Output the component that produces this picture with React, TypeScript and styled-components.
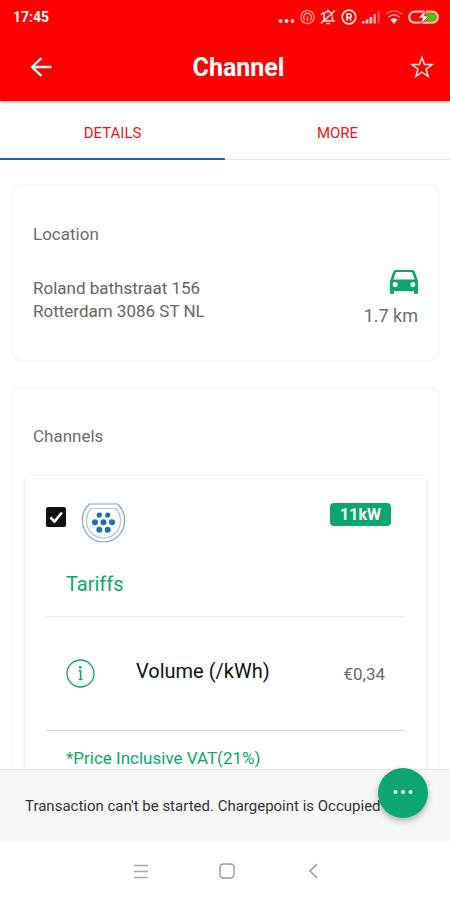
import React from "react";
import styled, { createGlobalStyle } from "styled-components";

const GREEN = "#0ba66e";
const RED = "#ff0000";
const GREY = "#6c6c6c";

const GlobalStyle = createGlobalStyle`
  *, *::before, *::after { box-sizing: border-box; }
  body { margin: 0; background: #fff; font-family: Roboto, sans-serif; }
  button { font: inherit; color: inherit; border: 0; padding: 0; background: none; cursor: pointer; }
  h1, h2, h3, p { margin: 0; font-weight: 400; }
  svg { display: block; }
`;

const Screen = styled.div`
  display: flex;
  flex-direction: column;
  height: 100vh;
  overflow: hidden;
`;

const Header = styled.header`
  flex: none;
  background: ${RED};
  color: #fff;
  box-shadow: 0 1px 4px rgba(0, 0, 0, 0.35);
  z-index: 1;
`;

const StatusBar = styled.div`
  display: flex;
  justify-content: space-between;
  align-items: center;
  height: 33px;
  padding: 0 11px 0 13px;
  font-size: 14px;
  font-weight: 700;
`;

const StatusIcons = styled.div`
  display: flex;
  align-items: center;
  gap: 5px;
`;

const AppBar = styled.div`
  display: grid;
  grid-template-columns: 48px 1fr 48px;
  align-items: center;
  height: 68px;
  padding: 0 4px 0 17px;
`;

const Title = styled.h1`
  padding: 2px 0 0 14px;
  font-size: 25px;
  font-weight: 700;
  line-height: 32px;
  text-align: center;
`;

const IconButton = styled.button`
  display: flex;
  align-items: center;
  justify-content: center;
  height: 48px;
`;

const Tabs = styled.div`
  flex: none;
  display: flex;
  border-bottom: 1px solid #e6e6e6;
`;

const Tab = styled.button<{ $active?: boolean }>`
  flex: 1;
  height: 59px;
  margin-bottom: -1px;
  padding-top: 6px;
  border-bottom: 2px solid ${(p) => (p.$active ? "#1764e0" : "transparent")};
  color: #e8161b;
  font-size: 15px;
  font-weight: 400;
`;

const Content = styled.main`
  flex: 1;
  min-height: 0;
  overflow: hidden;
  display: flex;
  flex-direction: column;
  gap: 25px;
  padding: 24px 10px 0 11px;
`;

const Card = styled.section<{ $wide?: boolean }>`
  flex: none;
  border: 2px solid #f7f7f7;
  border-radius: 11px;
  padding: ${(p) => (p.$wide ? "35px 12px 24px" : "36px 20px 32px")};
`;

const CardTitle = styled.h2<{ $inset?: boolean }>`
  padding-left: ${(p) => (p.$inset ? 8 : 0)}px;
  color: ${GREY};
  font-size: 17px;
  line-height: 24px;
`;

const LocationRow = styled.div`
  display: flex;
  justify-content: space-between;
  align-items: flex-end;
  margin-top: 24px;
`;

const Address = styled.address`
  padding-bottom: 5px;
  color: #666;
  font-size: 17px;
  font-style: normal;
  line-height: 23px;
`;

const Distance = styled.div`
  display: flex;
  flex-direction: column;
  align-items: flex-end;
  gap: 10px;
  color: ${GREY};
  font-size: 18px;
  line-height: 24px;
`;

const Channel = styled.article`
  margin-top: 28px;
  padding: 27px 21px 24px;
  border-radius: 4px;
  box-shadow: 0 1px 4px rgba(0, 0, 0, 0.15);
`;

const ChannelHead = styled.div`
  display: flex;
  align-items: flex-start;
  padding-right: 14px;
`;

const Check = styled.label`
  position: relative;
  display: block;
  width: 20px;
  height: 20px;
  margin: 4px 15px 0 0;
  svg {
    position: absolute;
    inset: 0;
    pointer-events: none;
  }
`;

const CheckInput = styled.input`
  appearance: none;
  display: block;
  width: 20px;
  height: 20px;
  margin: 0;
  border: 2px solid #111;
  border-radius: 2px;
  &:checked {
    background: #111;
  }
  &:not(:checked) + svg {
    display: none;
  }
`;

const Badge = styled.span`
  margin-left: auto;
  padding: 0 10px;
  border-radius: 4px;
  background: ${GREEN};
  color: #fff;
  font-size: 16px;
  font-weight: 700;
  line-height: 23px;
`;

const TariffTitle = styled.h3`
  padding: 28px 20px 20px;
  color: ${GREEN};
  font-size: 20px;
  line-height: 24px;
`;

const TariffRow = styled.div`
  display: flex;
  align-items: center;
  height: 115px;
  padding: 0 20px;
  border-top: 1px solid #eeeeee;
  border-bottom: 1px solid #dcdcdc;
`;

const Volume = styled.span`
  flex: 1;
  padding: 0 0 5px 41px;
  color: #111;
  font-size: 20px;
  line-height: 24px;
`;

const Price = styled.span`
  color: ${GREY};
  font-size: 17px;
  line-height: 24px;
`;

const Note = styled.p`
  padding: 15px 20px 0;
  color: ${GREEN};
  font-size: 17px;
  line-height: 24px;
`;

const Notice = styled.div`
  position: relative;
  flex: none;
  display: flex;
  align-items: center;
  height: 73px;
  padding-left: 25px;
  border-top: 1px solid #e4e4e4;
  background: #f7f7f7;
  color: #333;
  font-size: 15px;
`;

const Fab = styled.button`
  position: absolute;
  top: -2px;
  right: 22px;
  display: flex;
  align-items: center;
  justify-content: center;
  width: 50px;
  height: 50px;
  border-radius: 50%;
  background: ${GREEN};
  box-shadow: 0 3px 6px rgba(0, 0, 0, 0.3);
`;

const NavBar = styled.nav`
  flex: none;
  display: flex;
  align-items: center;
  justify-content: center;
  gap: 66px;
  height: 58px;
  padding-left: 3px;
  color: #999;
`;

const NavButton = styled.button`
  display: flex;
  align-items: center;
  justify-content: center;
  width: 20px;
  height: 24px;
`;

const StatusGlyphs = () => (
  <StatusIcons>
    <svg width="17" height="16" viewBox="0 0 17 16" fill="#ffe0e0">
      <circle cx="2.5" cy="12" r="2" />
      <circle cx="8.500" cy="12" r="2" />
      <circle cx="14.500" cy="12" r="2" />
    </svg>
    <svg width="15" height="16" viewBox="0 0 15 16" fill="none" stroke="#ff9a9a" strokeWidth="1.4">
      <circle cx="7.5" cy="8" r="6.600" />
      <path d="M5 11.200A3.900 3.900 0 1 1 10 11.200M7.500 7.500v5" />
    </svg>
    <svg width="16" height="16" viewBox="0 0 16 16" fill="none" stroke="#ffd6d6" strokeWidth="1.700" strokeLinecap="round">
      <path d="M3 12h11M4 11V7a4 4 0 0 1 8-1M12.400 8v3l1.600 1M8 1v2M7 14.500h2.400M1.500 14L14.500 2M1.500 5.500l2-2" />
    </svg>
    <svg width="16" height="16" viewBox="0 0 16 16" fill="none" stroke="#ffe8e8" strokeWidth="1.700">
      <circle cx="8" cy="8" r="6.800" />
      <path d="M6 11.500V5h2.400a1.700 1.700 0 0 1 0 3.600H6M8.300 8.600l1.900 2.900" />
    </svg>
    <svg width="18" height="16" viewBox="0 0 18 16" fill="#ffd6d6">
      <path d="M0 12h2.600v2.500H0zM3.800 10.500h2.600v4H3.800zM7.600 8h2.600v6.500H7.600z" />
      <path d="M11.400 5H14v9.500h-2.600z" fill="#ff9a9a" />
      <path d="M15.400 2H18v12.500h-2.600z" fill="#ff4040" />
    </svg>
    <svg width="18" height="16" viewBox="0 0 18 16" fill="none" strokeWidth="1.600">
      <path d="M1 5.500a11 11 0 0 1 16 0" stroke="#ff6a6a" />
      <path d="M3.400 8.200a7.800 7.800 0 0 1 11.200 0" stroke="#ffa0a0" />
      <path d="M5.500 10.600a5 5 0 0 1 7 0L9 15z" fill="#ffe0e0" />
    </svg>
    <svg width="31" height="16" viewBox="0 0 31 16">
      <rect x="1.200" y="2.700" width="28.600" height="11" rx="5.500" fill={RED} stroke="#ffc4c4" strokeWidth="2.200" />
      <path d="M17 4.300h7.300a3.900 3.900 0 0 1 0 7.800H13z" fill="#49c60c" />
      <path d="M17.500 1L10 9h4.500L12.500 15.500 21 7h-4.500z" fill="#fff" stroke={RED} strokeWidth=".8" />
    </svg>
  </StatusIcons>
);

const PlugIcon = () => (
  <svg width="45" height="41" viewBox="0 0 45 41" fill="none">
    <path d="M8.500 1h28A21 21 0 0 1 43.500 18a21 21 0 0 1-42 0A21 21 0 0 1 8.500 1z" stroke="#7ca3cf" strokeWidth="1.200" />
    <path d="M10.500 5.500h24A17 17 0 0 1 39.500 18a17 17 0 0 1-34 0A17 17 0 0 1 10.500 5.500z" stroke="#a9c5e4" strokeWidth="1.200" />
    <g fill="#1d70b0">
      <circle cx="18.300" cy="12" r="2.600" />
      <circle cx="26.700" cy="12" r="2.600" />
      <circle cx="14" cy="19.200" r="3" />
      <circle cx="22.500" cy="19.200" r="3" />
      <circle cx="31" cy="19.200" r="3" />
      <circle cx="18.300" cy="26.700" r="3" />
      <circle cx="26.700" cy="26.700" r="3" />
    </g>
  </svg>
);

export default function App() {
  return (
    <>
      <GlobalStyle />
      <Screen>
        <Header>
          <StatusBar>
            <span>17:45</span>
            <StatusGlyphs />
          </StatusBar>
          <AppBar>
            <IconButton aria-label="Back">
              <svg width="22" height="20" viewBox="0 0 22 20" fill="none" stroke="#fff" strokeWidth="2.400">
                <path d="M21.500 10H2M11.500 1L2 10l9.500 9" />
              </svg>
            </IconButton>
            <Title>Channel</Title>
            <IconButton aria-label="Add to favourites">
              <svg width="24" height="24" viewBox="0 0 24 24" fill="none" stroke="#ffe4e4" strokeWidth="1.500">
                <path d="M12 2.500l2.500 7.100H22l-6 4.600 2.200 7.300L12 17.200l-6.200 4.300L8 14.200 2 9.600h7.500z" />
              </svg>
            </IconButton>
          </AppBar>
        </Header>

        <Tabs role="tablist">
          <Tab role="tab" aria-selected="true" $active>DETAILS</Tab>
          <Tab role="tab" aria-selected="false">MORE</Tab>
        </Tabs>

        <Content>
          <Card>
            <CardTitle>Location</CardTitle>
            <LocationRow>
              <Address>
                Roland bathstraat 156
                <br />
                Rotterdam 3086 ST NL
              </Address>
              <Distance>
                <svg width="28" height="24" viewBox="0 0 28 24" fill={GREEN} fillRule="evenodd">
                  <path d="M6 0h16a3 3 0 0 1 2.900 2L28 11v11.500a1.500 1.500 0 0 1-1.500 1.500h-1a1.500 1.500 0 0 1-1.500-1.500V21H4v1.500A1.500 1.500 0 0 1 2.500 24h-1A1.500 1.500 0 0 1 0 22.500V11L3.100 2A3 3 0 0 1 6 0zM6 2L3.200 9.500h21.600L22 2zM5.200 12a2.500 2.500 0 1 0 0 5 2.500 2.500 0 0 0 0-5zM22.800 12a2.500 2.500 0 1 0 0 5 2.500 2.500 0 0 0 0-5z" />
                </svg>
                <span>1.7 km</span>
              </Distance>
            </LocationRow>
          </Card>

          <Card $wide>
            <CardTitle $inset>Channels</CardTitle>
            <Channel>
              <ChannelHead>
                <Check>
                  <CheckInput type="checkbox" defaultChecked aria-label="Select 11kW channel" />
                  <svg width="20" height="20" viewBox="0 0 20 20" fill="none" stroke="#fff" strokeWidth="2.600">
                    <path d="M4.500 10.500l4 4 7.500-9" />
                  </svg>
                </Check>
                <PlugIcon />
                <Badge>11kW</Badge>
              </ChannelHead>
              <TariffTitle>Tariffs</TariffTitle>
              <TariffRow>
                <svg width="29" height="29" viewBox="0 0 29 29" fill="none" stroke={GREEN}>
                  <circle cx="14.500" cy="14.500" r="13.500" strokeWidth="1.300" />
                  <path d="M12.600 11.800h2v8.700M12.600 20.500h3.800" strokeWidth="1.600" />
                  <circle cx="14.200" cy="8.400" r="1.300" fill={GREEN} stroke="none" />
                </svg>
                <Volume>Volume (/kWh)</Volume>
                <Price>€0,34</Price>
              </TariffRow>
              <Note>*Price Inclusive VAT(21%)</Note>
            </Channel>
          </Card>
        </Content>

        <Notice role="status">
          Transaction can't be started. Chargepoint is Occupied
          <Fab aria-label="More actions">
            <svg width="20" height="6" viewBox="0 0 20 6" fill="#fff">
              <circle cx="2.500" cy="2" r="2" />
              <circle cx="10" cy="2" r="2" />
              <circle cx="17.500" cy="2" r="2" />
            </svg>
          </Fab>
        </Notice>

        <NavBar aria-label="System">
          <NavButton aria-label="Recent apps">
            <svg width="14" height="15" viewBox="0 0 14 15" stroke="#aaa" strokeWidth="1.500">
              <path d="M0 1.500h14M0 7.500h14M0 13.500h14" />
            </svg>
          </NavButton>
          <NavButton aria-label="Home">
            <svg width="16" height="16" viewBox="0 0 16 16" fill="none" stroke="#999" strokeWidth="1.400">
              <rect x="1" y="1" width="14" height="14" rx="3.500" />
            </svg>
          </NavButton>
          <NavButton aria-label="Go back">
            <svg width="10" height="16" viewBox="0 0 10 16" fill="none" stroke="#999" strokeWidth="1.500">
              <path d="M9 1L2 8l7 7" />
            </svg>
          </NavButton>
        </NavBar>
      </Screen>
    </>
  );
}
